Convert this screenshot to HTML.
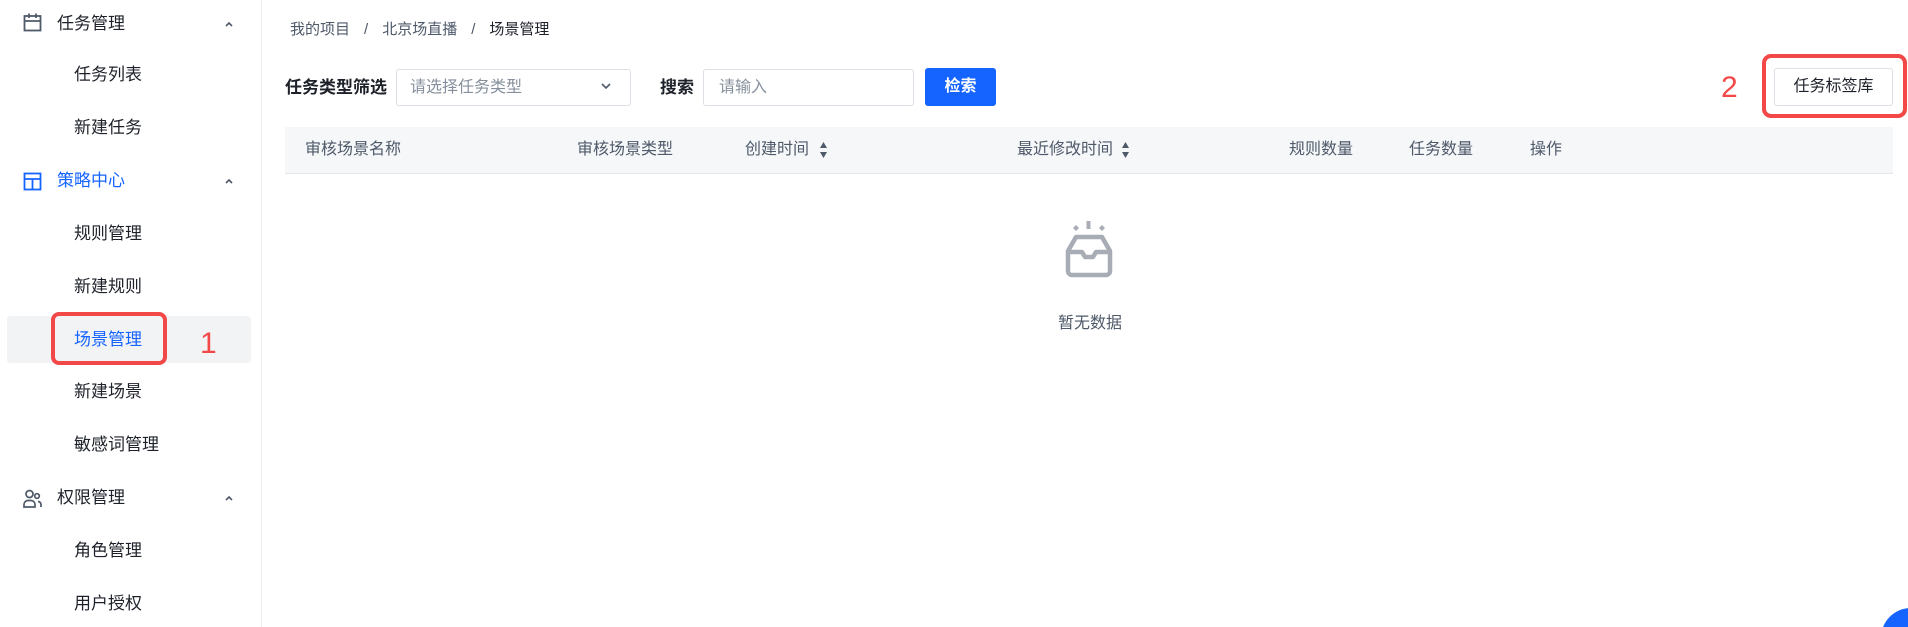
<!DOCTYPE html>
<html style="width:1908px;height:627px;overflow:hidden"><head><meta charset="utf-8"><style>
*{margin:0;padding:0;box-sizing:border-box}
body{width:1908px;height:627px;overflow:hidden;background:#fff;font-family:"Liberation Sans","Noto Sans CJK SC",sans-serif;color:#1d2129;position:relative}
.side{position:absolute;left:0;top:0;width:262px;height:627px;background:#fff;border-right:1px solid #eceef2}
.it{position:absolute;font-size:17px;line-height:20px;white-space:nowrap}
.g{left:57px}.s{left:74px}
.arr{position:absolute;left:223px;width:12px;height:12px}
.ic{position:absolute;left:23px;width:19px;height:19px}
.a{position:absolute}
</style></head><body>
<div class="side">
 <svg class="ic" style="top:13px" viewBox="0 0 19 19" fill="none" stroke="#4e5969" stroke-width="1.8"><rect x="1.5" y="3" width="16" height="14.5"/><path d="M1.5 8h16M6 0.5v4.5M13 0.5v4.5"/></svg>
 <div class="it g" style="top:14px;color:#1d2129">任务管理</div>
 <svg class="arr" style="top:18px" viewBox="0 0 12 12" fill="none" stroke="#4e5969" stroke-width="1.6"><path d="M3 8l3-3 3 3"/></svg>
 <div class="it s" style="top:65px">任务列表</div>
 <div class="it s" style="top:118px">新建任务</div>
 <svg class="ic" style="top:172px" viewBox="0 0 19 19" fill="none" stroke="#1664ff" stroke-width="1.8"><rect x="1.5" y="1.5" width="16" height="16"/><path d="M1.5 7h16M9.5 7v10.5"/></svg>
 <div class="it g" style="top:171px;color:#1664ff">策略中心</div>
 <svg class="arr" style="top:175px" viewBox="0 0 12 12" fill="none" stroke="#4e5969" stroke-width="1.6"><path d="M3 8l3-3 3 3"/></svg>
 <div class="it s" style="top:224px">规则管理</div>
 <div class="it s" style="top:277px">新建规则</div>
 <div class="a" style="left:7px;top:316px;width:244px;height:47px;background:#f2f3f5;border-radius:3px"></div>
 <div class="it s" style="top:330px;color:#1664ff">场景管理</div>
 <div class="a" style="left:51px;top:312px;width:116px;height:53px;border:4px solid #f24848;border-radius:8px"></div>
 <div class="a" style="left:200px;top:326px;font-size:30px;color:#f24848;line-height:36px">1</div>
 <div class="it s" style="top:382px">新建场景</div>
 <div class="it s" style="top:435px">敏感词管理</div>
 <svg class="ic" style="top:489px" viewBox="0 0 19 19" fill="none" stroke="#4e5969" stroke-width="1.7"><circle cx="6.5" cy="5" r="3.5"/><path d="M1 18v-2.5a4 4 0 014-4h3a4 4 0 014 4V18z"/><circle cx="14" cy="7" r="2.3"/><path d="M15 12.5a3 3 0 013 3V18"/></svg>
 <div class="it g" style="top:488px">权限管理</div>
 <svg class="arr" style="top:492px" viewBox="0 0 12 12" fill="none" stroke="#4e5969" stroke-width="1.6"><path d="M3 8l3-3 3 3"/></svg>
 <div class="it s" style="top:541px">角色管理</div>
 <div class="it s" style="top:594px">用户授权</div>
</div>

<div class="a" style="left:290px;top:21px;font-size:15px;color:#4e5969;white-space:nowrap;line-height:18px">我的项目<span style="margin:0 14px">/</span>北京场直播<span style="margin:0 14px">/</span><span style="color:#1d2129">场景管理</span></div>

<div class="a" style="left:285px;top:78px;font-size:17px;font-weight:bold;line-height:20px">任务类型筛选</div>
<div class="a" style="left:396px;top:69px;width:235px;height:37px;border:1px solid #dcdfe5;border-radius:3px"></div>
<div class="a" style="left:410px;top:78px;font-size:16px;color:#86909c;line-height:20px">请选择任务类型</div>
<svg class="a" style="left:600px;top:80px" width="12" height="12" viewBox="0 0 12 12" fill="none" stroke="#4e5969" stroke-width="1.6"><path d="M2 4l4 4 4-4"/></svg>
<div class="a" style="left:660px;top:78px;font-size:17px;font-weight:bold;line-height:20px">搜索</div>
<div class="a" style="left:703px;top:69px;width:211px;height:37px;border:1px solid #dcdfe5;border-radius:3px"></div>
<div class="a" style="left:719px;top:78px;font-size:16px;color:#86909c;line-height:20px">请输入</div>
<div class="a" style="left:925px;top:68px;width:71px;height:38px;background:#1664ff;border-radius:3px;color:#fff;font-size:16px;font-weight:bold;text-align:center;line-height:38px">检索</div>

<div class="a" style="left:1721px;top:70px;font-size:30px;color:#f24848;line-height:36px">2</div>
<div class="a" style="left:1774px;top:68px;width:119px;height:38px;border:1px solid #dcdfe5;border-radius:3px;font-size:16px;text-align:center;line-height:36px">任务标签库</div>
<div class="a" style="left:1762px;top:54px;width:145px;height:64px;border:4px solid #f24848;border-radius:9px"></div>

<div class="a" style="left:285px;top:127px;width:1608px;height:47px;background:#f6f7f9;border-bottom:1px solid #e5e6eb"></div>
<span class="a" style="top:140px;left:305px;font-size:16px;color:#4e5969;line-height:20px">审核场景名称</span>
<span class="a" style="top:140px;left:577px;font-size:16px;color:#4e5969;line-height:20px">审核场景类型</span>
<span class="a" style="top:140px;left:745px;font-size:16px;color:#4e5969;line-height:20px">创建时间</span>
<span class="a" style="top:140px;left:1017px;font-size:16px;color:#4e5969;line-height:20px">最近修改时间</span>
<span class="a" style="top:140px;left:1289px;font-size:16px;color:#4e5969;line-height:20px">规则数量</span>
<span class="a" style="top:140px;left:1409px;font-size:16px;color:#4e5969;line-height:20px">任务数量</span>
<span class="a" style="top:140px;left:1530px;font-size:16px;color:#4e5969;line-height:20px">操作</span>
<svg class="a" style="left:819px;top:141px" width="9" height="18" viewBox="0 0 9 18" fill="#4e5969"><path d="M4.5 1L8 7H1zM4.5 17L8 11H1z"/></svg>
<svg class="a" style="left:1121px;top:141px" width="9" height="18" viewBox="0 0 9 18" fill="#4e5969"><path d="M4.5 1L8 7H1zM4.5 17L8 11H1z"/></svg>

<svg class="a" style="left:1062px;top:220px" width="54" height="58" viewBox="0 0 54 58" fill="none">
 <rect x="24.5" y="1" width="4" height="8" fill="#a8acb5"/>
 <path d="M14 5l3 3-3 3-3-3zM40 5l3 3-3 3-3-3z" fill="#a8acb5"/>
 <path d="M14 17h26l8 14v20a4 4 0 01-4 4H10a4 4 0 01-4-4V31z" stroke="#a8acb5" stroke-width="4.5" stroke-linejoin="round"/>
 <path d="M7 32h13l3 5h8l3-5h13" stroke="#a8acb5" stroke-width="4.5" stroke-linejoin="round"/>
</svg>
<div class="a" style="left:1058px;top:314px;font-size:16px;color:#4e5969;line-height:20px">暂无数据</div>

<svg class="a" style="left:1881px;top:608px;display:block" width="27" height="19" viewBox="0 0 27 19"><circle cx="30" cy="30" r="30" fill="#1664ff"/></svg>
</body></html>
